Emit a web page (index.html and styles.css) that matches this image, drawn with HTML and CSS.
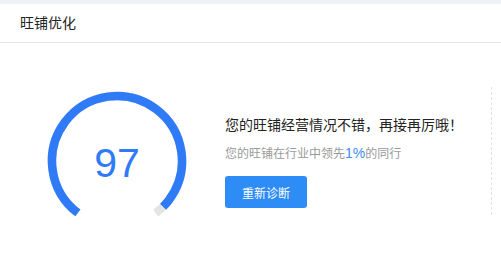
FILE: index.html
```html
<!DOCTYPE html>
<html lang="zh-CN">

<head>
    <meta charset="UTF-8">
    <meta name="viewport" content="width=device-width, initial-scale=1.0">
    <title>旺铺优化</title>
    <link rel="stylesheet" href="styles.css">
</head>

<body>
    <div class="top-strip"></div>

    <div class="panel-header">旺铺优化</div>

    <div class="panel-body">
        <div class="gauge">
            <svg width="140" height="140" viewBox="0 0 140 140">
                <!-- 底色轨道 (286°) -->
                <circle class="gauge-track" cx="70" cy="70" r="65"
                    stroke-dasharray="324.5 408.4" transform="rotate(127 70 70)"></circle>
                <!-- 得分 97% -->
                <circle class="gauge-value" cx="70" cy="70" r="65"
                    stroke-dasharray="314.8 408.4" transform="rotate(127 70 70)"></circle>
                <text class="gauge-score" x="70" y="86" text-anchor="middle">97</text>
            </svg>
        </div>

        <div class="summary">
            <div class="summary-title">您的旺铺经营情况不错，再接再厉哦！</div>
            <div class="summary-desc">您的旺铺在行业中领先<span class="rank">1%</span>的同行</div>
            <button class="btn-primary">重新诊断</button>
        </div>
    </div>
</body>

</html>
```

FILE: styles.css
```css
* {
    margin: 0;
    padding: 0;
    box-sizing: border-box;
}

body {
    font-family: "Liberation Sans", "Noto Sans CJK SC", sans-serif;
    background-color: white;
    color: #333;
}

.top-strip {
    height: 4px;
    background-color: #eef1f6;
}

.panel-header {
    height: 39px;
    line-height: 38px;
    padding-left: 20px;
    font-size: 14px;
    color: #222;
    border-bottom: 1px solid #e6e6e6;
}

.panel-body {
    display: flex;
    align-items: flex-start;
    padding: 48px 9px 0 47px;
}

.gauge svg {
    display: block;
}

.gauge-track,
.gauge-value {
    fill: none;
    stroke-width: 8.5;
}

.gauge-track {
    stroke: #e4e4e4;
}

.gauge-value {
    stroke: #2f7bf7;
}

.gauge-score {
    font-family: "Liberation Sans", Arial, sans-serif;
    font-size: 41px;
    fill: #2f7bf7;
}

.summary {
    flex: 1;
    height: 128px;
    margin-top: -4px;
    margin-left: 38px;
    padding-top: 28px;
    border-right: 1px dashed #e2e2e2;
}

.summary-title {
    font-size: 14px;
    line-height: 20px;
    color: #222;
}

.summary-desc {
    margin-top: 8px;
    font-size: 12px;
    line-height: 20px;
    color: #999;
}

.rank {
    font-size: 14px;
    color: #3b8cf4;
}

.btn-primary {
    margin-top: 12px;
    width: 82px;
    height: 32px;
    border: none;
    border-radius: 3px;
    background-color: #2d8cf6;
    color: white;
    font-family: inherit;
    font-size: 12px;
}
```
